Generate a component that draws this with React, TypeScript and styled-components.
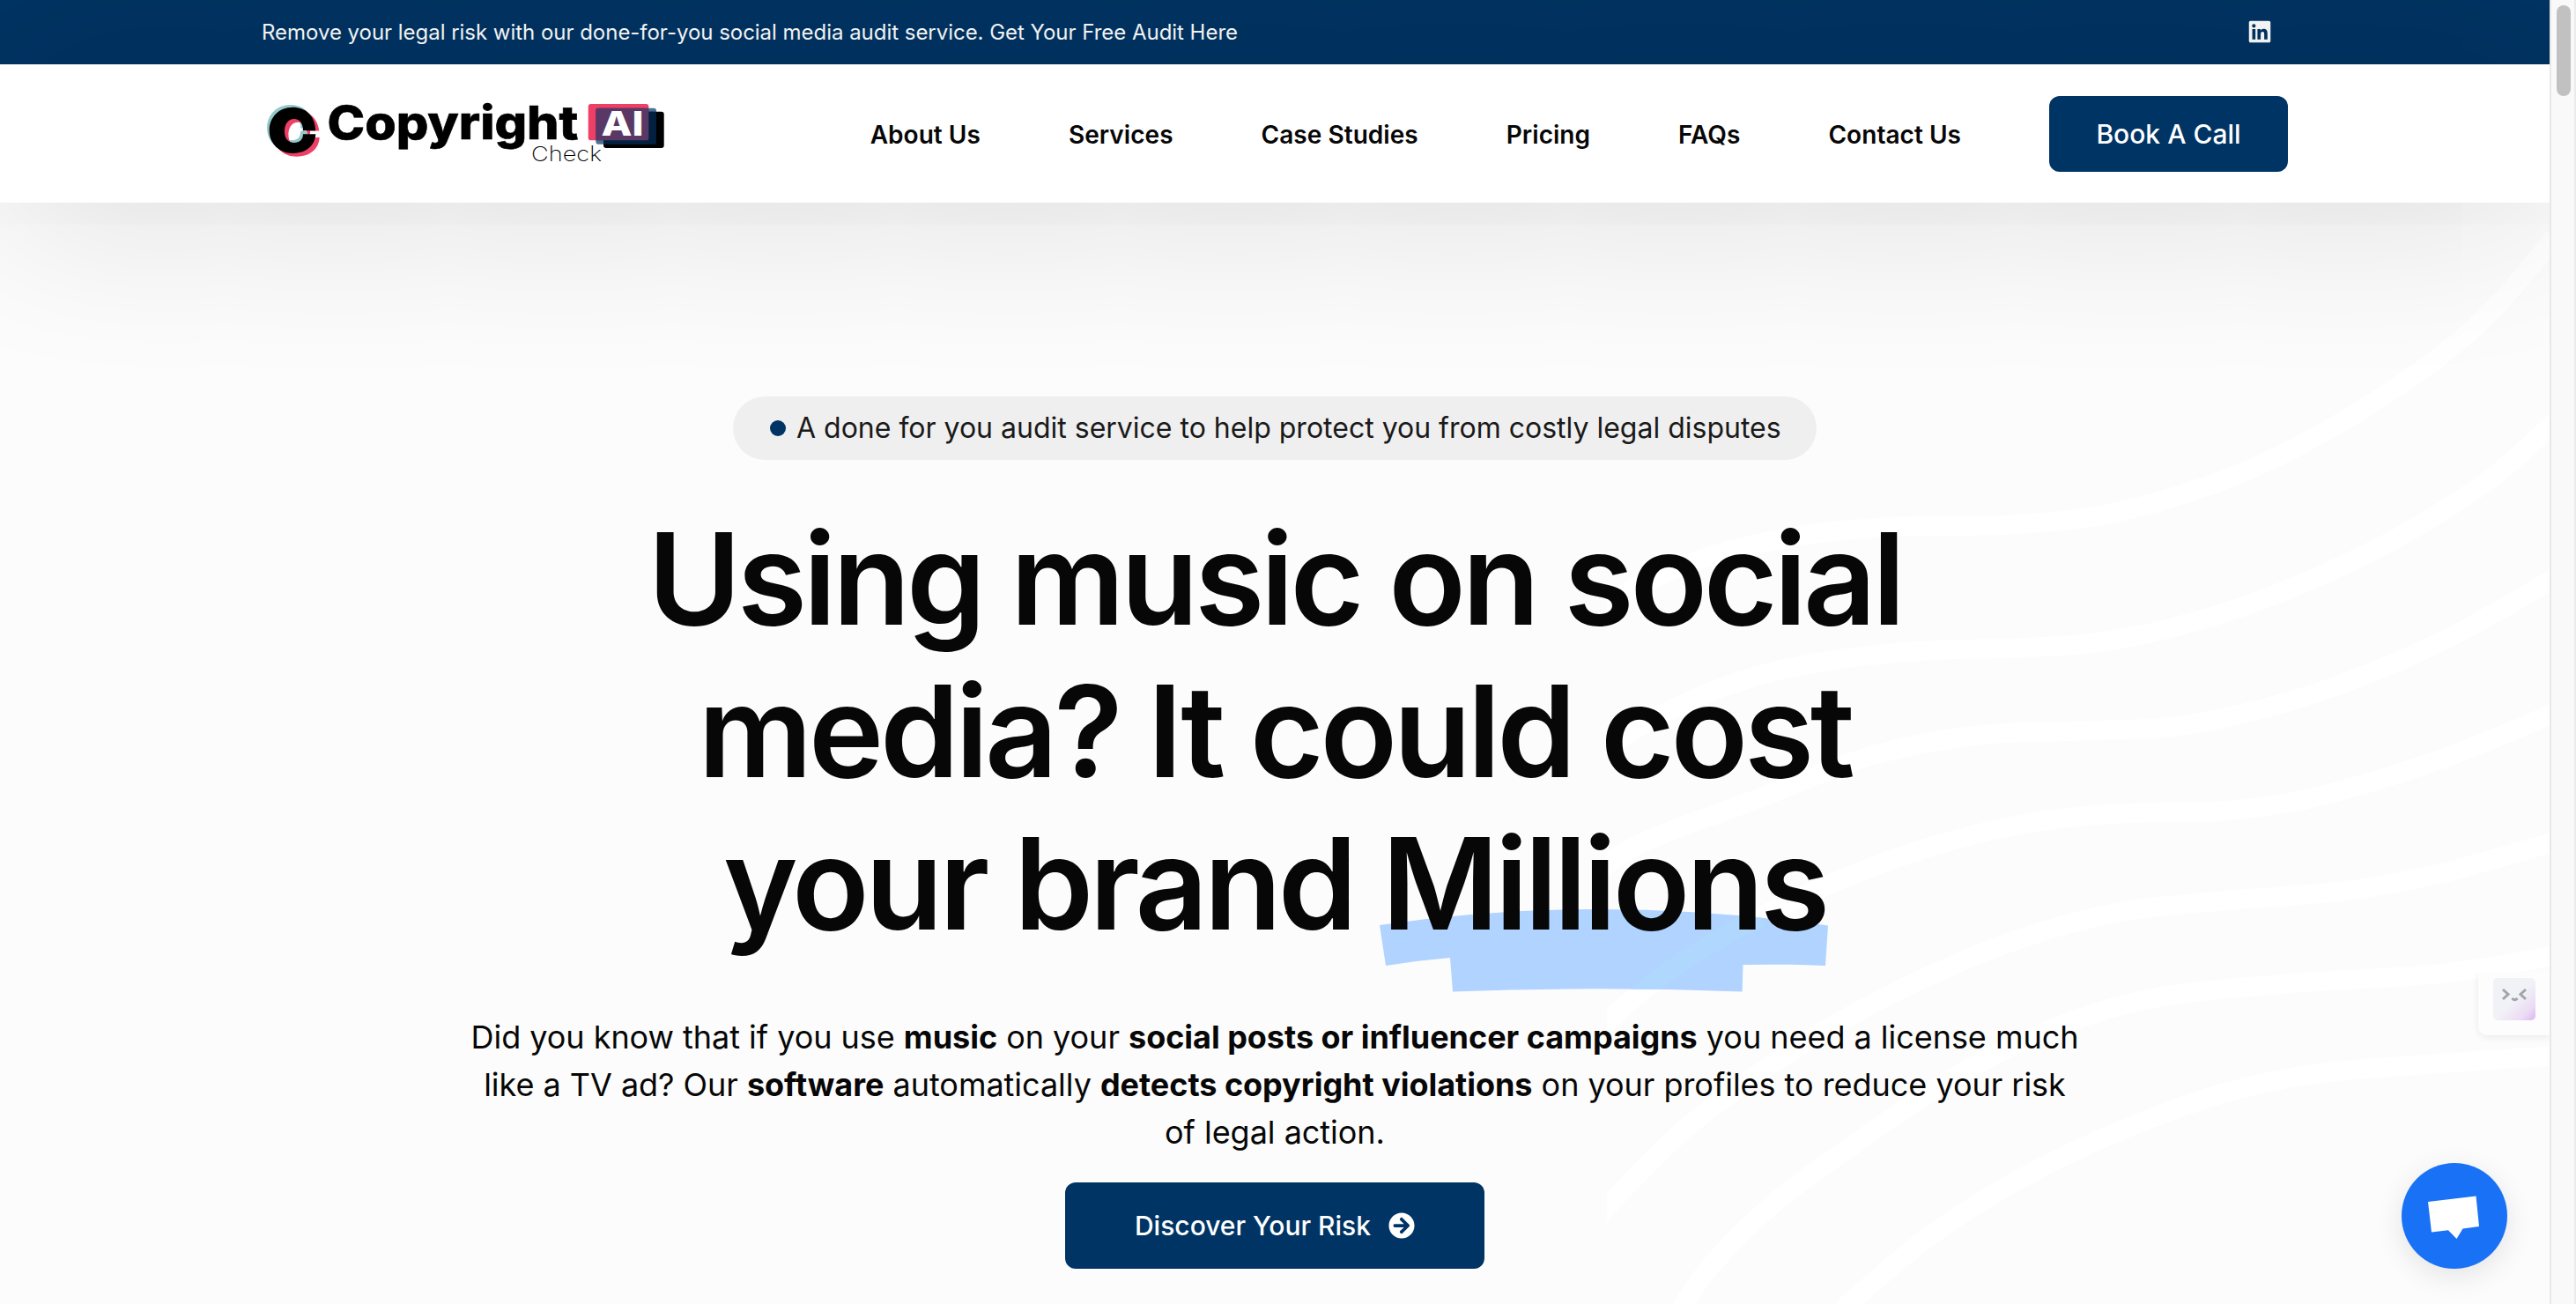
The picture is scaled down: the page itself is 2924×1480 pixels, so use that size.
import React from "react";
import styled, { createGlobalStyle } from "styled-components";
import { FaLinkedin, FaArrowCircleRight } from "react-icons/fa";

const NAVY = "#003464";
const FONT = 'Inter, "Liberation Sans", sans-serif';

const GlobalStyle = createGlobalStyle`
  * { box-sizing: border-box; }
  html, body { margin: 0; padding: 0; }
  body { background: #fcfcfc; font-family: ${FONT}; color: #070707; overflow: hidden; }
`;

const Window = styled.div`
  display: grid;
  grid-template-columns: 1fr 30px;
  width: 2924px;
  height: 1480px;
  overflow: hidden;
`;

const Page = styled.div`
  position: relative;
  display: flex;
  flex-direction: column;
  overflow: hidden;
`;

const TopBar = styled.div`
  height: 73px;
  flex: none;
  padding: 0 315px 1px 297px;
  display: flex;
  align-items: center;
  justify-content: space-between;
  background: ${NAVY};
  color: #fff;
  font-size: 24px;
  letter-spacing: -0.03px;
`;

const Header = styled.header`
  position: relative;
  z-index: 2;
  height: 157px;
  flex: none;
  padding: 0 297px 0 303px;
  display: flex;
  align-items: center;
  justify-content: space-between;
  background: #fff;
  box-shadow: 0 0 200px rgba(0, 0, 0, 0.165);
`;

const Nav = styled.nav`
  display: flex;
  align-items: center;
  gap: 100px;
`;

const NavLink = styled.a`
  padding-top: 2px;
  font-size: 28px;
  font-weight: 600;
  letter-spacing: 0.04px;
  white-space: nowrap;
`;

const Button = styled.button<{ $w: number; $h: number }>`
  width: ${(p) => p.$w}px;
  height: ${(p) => p.$h}px;
  display: flex;
  align-items: center;
  justify-content: center;
  gap: 20px;
  border: 0;
  border-radius: 12px;
  background: ${NAVY};
  color: #fff;
  font: 500 30px ${FONT};
  white-space: nowrap;
`;

const Hero = styled.main`
  position: relative;
  flex: 1;
  display: flex;
  flex-direction: column;
  align-items: center;
  padding-top: 220px;
`;

const Waves = styled.svg`
  position: absolute;
  left: 1824px;
  top: 20px;
`;

const Pill = styled.div`
  position: relative;
  width: 1230px;
  height: 72px;
  border-radius: 36px;
  background: #efefef;
  display: flex;
  align-items: center;
  padding: 0 0 1px 42px;
  gap: 12px;
  font-size: 32px;
  color: #1a1a1a;
  white-space: nowrap;
`;

const Dot = styled.span`
  width: 18px;
  height: 18px;
  border-radius: 50%;
  background: ${NAVY};
`;

const Title = styled.h1`
  position: relative;
  isolation: isolate;
  margin: 49px 0 1px;
  font-size: 144px;
  line-height: 172.8px;
  font-weight: 620;
  letter-spacing: -0.0295em;
  text-align: center;
  white-space: nowrap;
`;

const Marked = styled.span`
  position: relative;
  display: inline-block;
`;

const Swoosh = styled.svg`
  position: absolute;
  z-index: -1;
  left: -2px;
  top: 115px;
`;

const Lead = styled.p`
  position: relative;
  margin: 60px 0 30px;
  font-size: 36px;
  line-height: 54px;
  letter-spacing: -0.03px;
  text-align: center;
  white-space: nowrap;
`;

const Cta = styled.div`
  position: relative;
`;

const AssistantTab = styled.div`
  position: absolute;
  right: 0;
  top: 1104px;
  width: 81px;
  height: 71px;
  display: flex;
  justify-content: center;
  padding-top: 6px;
  background: rgba(253, 253, 253, 0.9);
  border-radius: 0 0 0 10px;
  box-shadow: 0 2px 8px rgba(0, 0, 0, 0.08);
  clip-path: inset(0 0 -12px -12px);
`;

const Chat = styled.div`
  position: absolute;
  left: 2726px;
  top: 1320px;
  width: 120px;
  height: 120px;
  border-radius: 50%;
  background: #1972f5;
  box-shadow: 0 8px 32px rgba(0, 0, 0, 0.1);
`;

const Scrollbar = styled.div`
  background: #f9f9f9;
  border-left: 2px solid #e8e8e8;
  border-right: 2px solid #ebebeb;
  padding: 6px 4px 0 6px;
`;

const Thumb = styled.div`
  width: 16px;
  height: 103px;
  border-radius: 8px;
  background: #c1c1c1;
`;

const LogoMark = styled.svg`
  overflow: visible;
  margin-bottom: 5px;
`;

const RING =
  "M358.300 148.300 L344 148.300 C344 140 340 135 334 135 C327 135 323 141 323 149 C323 157 327 162 334 162 C340 162 344 158.500 344 152.300 L358.300 152.300 C357.500 166 346.500 174 332.500 174 C317 174 305.700 163 305.700 148 C305.700 133 317 121.700 332 121.700 C347 121.700 357.500 131 358.300 148.300 Z";

const Logo = () => (
  <LogoMark width="452" height="68" viewBox="303 115 452 68">
    <path d={RING} fill="#94c8cb" transform="translate(-2.600 -2.800)" />
    <path d={RING} fill="#ee3f66" transform="translate(4.400 3.800)" />
    <rect x="352" y="148.500" width="12" height="6.500" fill="#fff" />
    <path d="M339.500 161.500 C343 159 344.300 156 344.500 152.300 L350 151 L344 148.300 L341 149 C341 155 339 159 335 161.500 Z" fill="#94c8cb" />
    <path d={RING} fill="#000" />
    <text x="371.500" y="158" textLength="285" lengthAdjust="spacingAndGlyphs" fontFamily="Inter" fontWeight="800" fontSize="52.500" stroke="#000" strokeWidth="0.600">Copyright</text>
    <text x="603" y="182.700" textLength="80" lengthAdjust="spacingAndGlyphs" fontFamily="Inter" fontWeight="250" fontSize="23.500">Check</text>
    <rect x="685" y="126.700" width="68.700" height="41.300" rx="3" fill="#000" />
    <rect x="667.700" y="118" width="68.600" height="41.300" rx="3" fill="#ee3f66" />
    <rect x="676.300" y="122.700" width="68.700" height="41" rx="3" fill="#003464" fillOpacity="0.7" />
    <rect x="685" y="126.700" width="60" height="37" rx="2" fill="#02203f" />
    <rect x="676.300" y="122.700" width="60" height="36.600" rx="2" fill="#5a3866" />
    <text x="682.500" y="154" textLength="48" lengthAdjust="spacingAndGlyphs" fontFamily="Inter" fontWeight="800" fontSize="38.500" fill="#fff">AI</text>
  </LogoMark>
);

const WAVE_POINTS: number[][][] = [
  [[1530, 25], [1410, 150], [1250, 260], [1050, 360], [850, 420], [680, 440], [500, 443], [350, 455], [200, 485], [80, 530], [0, 575]],
  [[1530, 292], [1420, 380], [1250, 475], [1050, 555], [850, 605], [700, 618], [550, 622], [400, 635], [250, 665], [120, 715], [0, 780]],
  [[1530, 518], [1350, 610], [1150, 685], [950, 730], [800, 738], [620, 745], [450, 775], [271, 837], [79, 905], [0, 960]],
  [[1530, 713], [1350, 780], [1150, 835], [1000, 855], [850, 858], [700, 872], [550, 905], [400, 955], [203, 1041], [110, 1100], [54, 1143], [10, 1185]],
  [[1530, 899], [1350, 945], [1200, 970], [1000, 985], [850, 1000], [700, 1035], [550, 1090], [400, 1160], [280, 1230], [150, 1320], [20, 1440]],
  [[1530, 1064], [1350, 1090], [1100, 1105], [900, 1125], [750, 1165], [600, 1230], [450, 1320], [300, 1420], [200, 1510], [150, 1575]],
  [[1530, 1209], [1350, 1220], [1150, 1235], [1000, 1265], [850, 1315], [700, 1380], [550, 1465], [405, 1575]],
];

const smooth = (raw: number[][]) => {
  const p = raw.map(([x, y]) => [x * 0.7187 - 24, y * 0.7845]);
  let d = `M${p[0][0]} ${p[0][1]}`;
  for (let i = 0; i < p.length - 1; i++) {
    const a = p[i - 1] ?? p[i];
    const b = p[i];
    const c = p[i + 1];
    const e = p[i + 2] ?? c;
    d += ` C${b[0] + (c[0] - a[0]) / 6} ${b[1] + (c[1] - a[1]) / 6} ${c[0] - (e[0] - b[0]) / 6} ${c[1] - (e[1] - b[1]) / 6} ${c[0]} ${c[1]}`;
  }
  return d;
};

const SWOOSH =
  "M1566 1050 Q1690 1032 1812 1032 Q1945 1032 2075 1050.5 L2072 1096 Q2025 1094 1978.5 1095 L1977.6 1125.5 Q1812 1119 1649 1125.5 L1646 1087 Q1610 1090 1573 1096 Z";

const LINKS = ["About Us", "Services", "Case Studies", "Pricing", "FAQs", "Contact Us"];

export default function App() {
  return (
    <>
      <GlobalStyle />
      <Window>
        <Page>
          <TopBar>
            <span>Remove your legal risk with our done-for-you social media audit service. Get Your Free Audit Here</span>
            <FaLinkedin size={28} />
          </TopBar>
          <Header>
            <Logo />
            <Nav>
              {LINKS.map((l) => (
                <NavLink key={l}>{l}</NavLink>
              ))}
              <Button $w={271} $h={86}>Book A Call</Button>
            </Nav>
          </Header>
          <Hero>
            <Waves width="1070" height="1230" viewBox="0 0 1070 1230">
              {WAVE_POINTS.map((w, i) => (
                <path key={i} d={smooth(w)} fill="none" stroke="#fff" strokeWidth="22" />
              ))}
            </Waves>
            <Pill>
              <Dot />
              A done for you audit service to help protect you from costly legal disputes
            </Pill>
            <Title>
              Using music on social
              <br />
              media? It could cost
              <br />
              your brand{" "}
              <Marked>
                <Swoosh width="510" height="94" viewBox="1566 1032 510 94">
                  <clipPath id="swoosh">
                    <path d={SWOOSH} />
                  </clipPath>
                  <path fill="#b0d3ff" d={SWOOSH} />
                  <path
                    d="M2000 1040 Q1946 1065 1879 1113 L1845 1142"
                    fill="none"
                    stroke="#b0d8ff"
                    strokeWidth="22"
                    clipPath="url(#swoosh)"
                  />
                </Swoosh>
                Millions
              </Marked>
            </Title>
            <Lead>
              Did you know that if you use <b>music</b> on your <b>social posts or influencer campaigns</b> you need a license much
              <br />
              like a TV ad? Our <b>software</b> automatically <b>detects copyright violations</b> on your profiles to reduce your risk
              <br />
              of legal action.
            </Lead>
            <Cta>
              <Button $w={476} $h={98}>
                Discover Your Risk
                <FaArrowCircleRight size={30} />
              </Button>
            </Cta>
          </Hero>
          <AssistantTab>
            <svg width="48" height="48" viewBox="0 0 48 48">
              <defs>
                <linearGradient id="tile" x1="0" y1="0" x2="1" y2="1">
                  <stop offset="0.5" stopColor="#f1f2f6" />
                  <stop offset="0.8" stopColor="#ecdcf5" />
                  <stop offset="1" stopColor="#d9b8ee" />
                </linearGradient>
              </defs>
              <rect width="48" height="48" rx="5" fill="url(#tile)" />
              <path d="M11 13 L17 18.500 L11 24 M37 13 L31 18.500 L37 24 M21.500 23 Q24.500 26.500 27.500 23" fill="none" stroke="#a2a4ab" strokeWidth="3" />
            </svg>
          </AssistantTab>
          <Chat>
            <svg width="120" height="120" viewBox="0 0 120 120">
              <path d="M30 44 L84.500 37.500 L88 72 L69.500 74.500 L62.500 86 L53 76.300 L34 78.500 Z" fill="#fff" />
            </svg>
          </Chat>
        </Page>
        <Scrollbar>
          <Thumb />
        </Scrollbar>
      </Window>
    </>
  );
}
